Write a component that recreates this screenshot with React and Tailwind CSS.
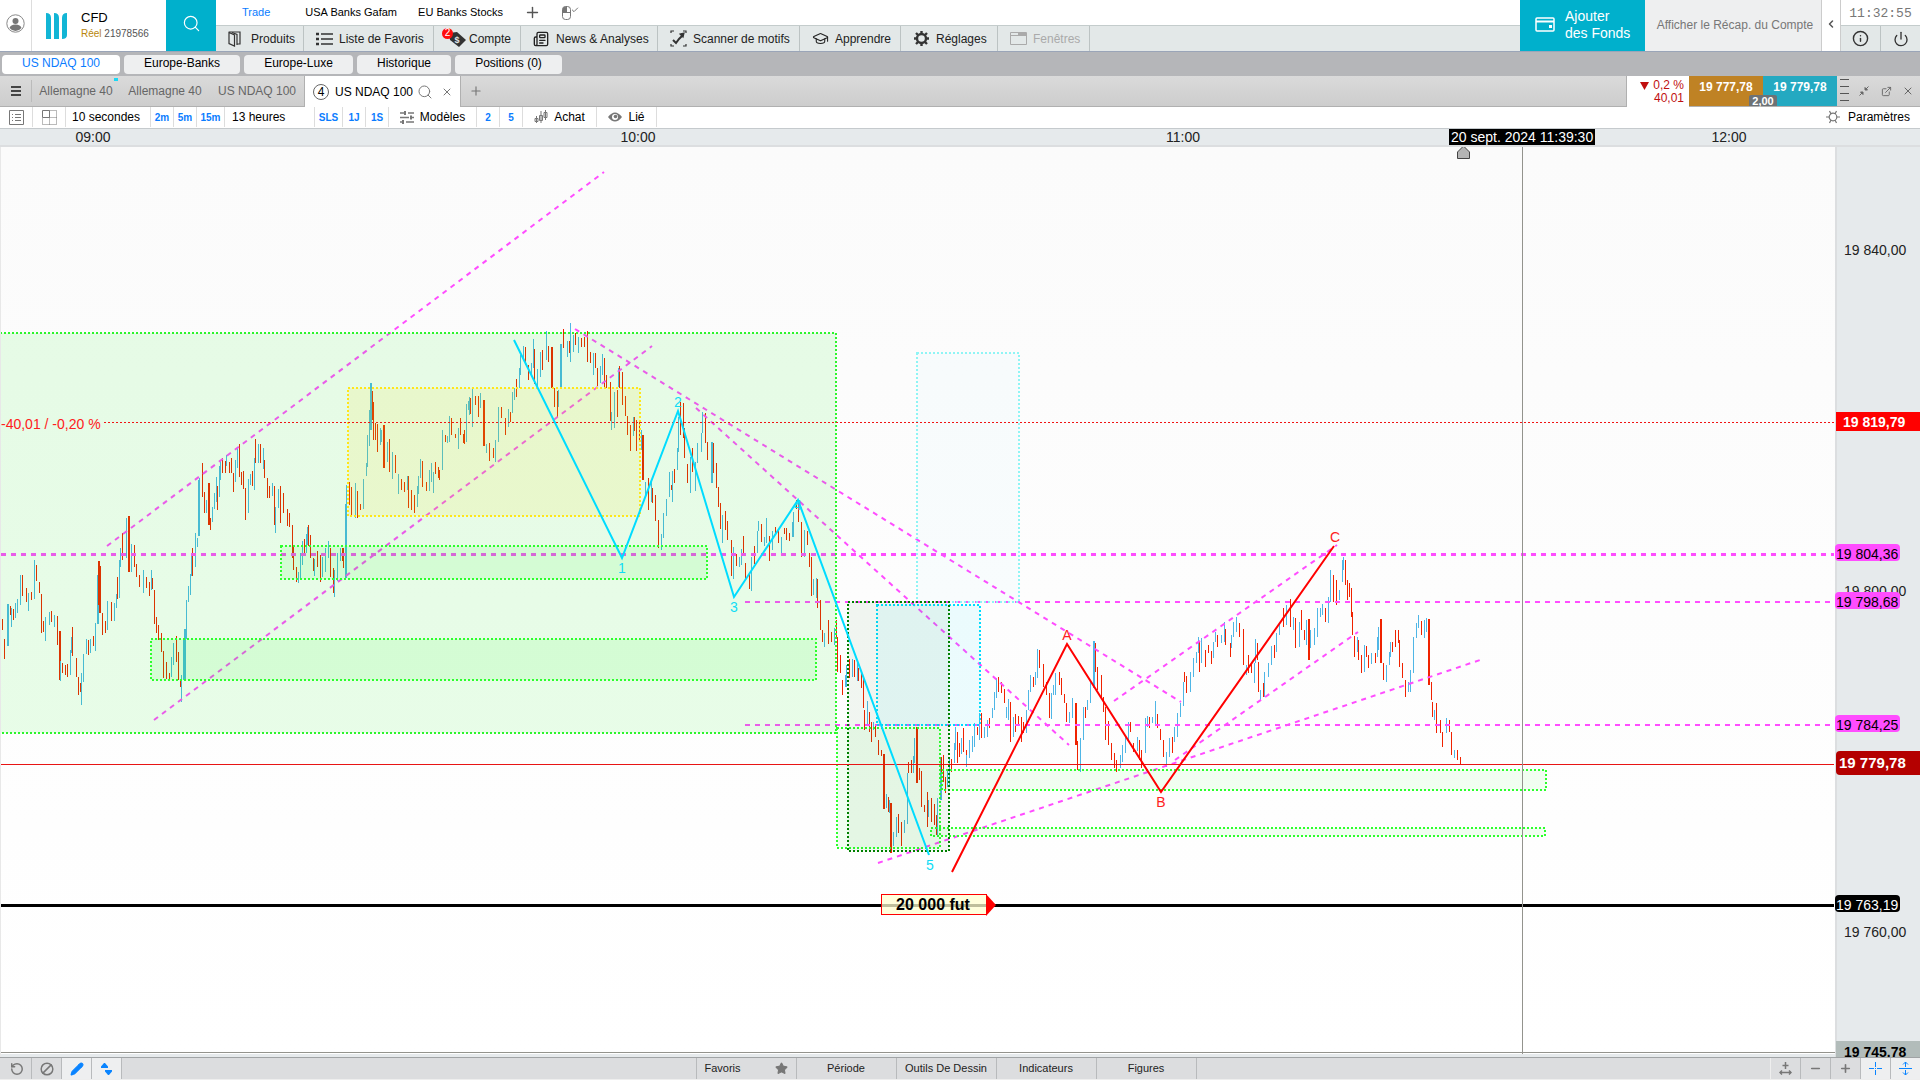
import { Search, Plus, X, Check, Power, Info, ExternalLink, GraduationCap, Newspaper, Ban, RotateCcw, Pencil, Star, Minus, ChevronLeft } from "lucide-react";

const FONT = "font-['Liberation_Sans',Arial,sans-serif]";

// one entry per bar: direction (u/d), x, high, low
const BARS = `
d2,619,630 d4,639,659 u7,604,646 d10,606,615 u11,608,627 d13,609,620 u15,603,618 u17,599,613 u20,575,605 d22,575,596
d26,588,602 u28,593,611 d31,592,600 u34,560,599 d36,565,581 d39,582,593 d41,594,633 d43,621,632 u45,617,641 u49,612,625
d51,611,622 u54,615,627 d57,616,645 d59,631,680 u60,661,681 d62,663,673 d65,665,675 d67,664,677 u70,650,675 u71,637,653
d72,627,656 d76,658,677 d78,677,695 d80,683,692 u81,673,705 u83,654,682 u86,639,654 d88,640,655 u90,639,653 d93,636,646
u95,623,651 u97,575,624 d98,561,605 d99,566,613 d102,613,635 d105,621,633 u107,601,630 d111,602,621 u114,603,621 u116,594,608
d117,577,599 u119,560,598 u120,548,567 d122,533,560 u126,518,558 d128,516,572 u131,544,572 d134,545,567 d136,564,577 d139,575,587
u143,570,593 d146,577,588 d149,582,596 u151,570,590 d152,578,589 d154,590,624 d156,617,633 d158,625,640 d161,633,652 d163,651,678
d166,662,679 d169,673,679 u171,657,677 u173,643,665 d176,636,662 d178,652,680 d180,680,687 u181,675,702 u183,640,680 u184,629,680
u186,600,639 u188,586,602 u190,574,595 d192,548,576 u191,556,576 u195,533,567 u197,538,547 u198,480,536 u199,478,500 d202,463,497
d204,492,513 u206,500,513 d208,483,525 d210,518,530 u212,507,522 u214,493,509 u216,477,502 d217,486,510 u219,466,497 u220,461,480
d222,458,473 d225,461,473 u226,455,466 d229,462,473 d231,458,473 d233,473,492 u235,460,482 u237,448,468 d239,444,477 d241,472,485
d243,471,489 d245,488,520 u248,479,513 u250,474,485 d252,471,486 u254,458,490 d255,439,463 u258,444,463 d260,444,463 u263,448,469
d264,460,478 d267,478,498 d269,486,498 u272,483,496 d274,486,525 u275,507,533 u278,489,508 d280,486,523 d283,493,513 d287,509,526
d289,513,527 d292,525,558 d293,547,570 d296,567,582 u298,572,583 u300,553,579 u302,541,565 d304,539,556 u306,534,553 u307,527,545
d308,525,546 d310,535,558 d313,558,571 u314,559,576 d317,551,567 d320,555,582 u322,557,577 u325,548,572 u328,541,558 d330,548,577
d333,568,593 u334,570,597 u337,553,581 u340,548,561 d342,548,561 d343,548,568 u345,504,578 u346,485,510 d349,482,505 d351,487,516
u355,483,518 d357,491,518 d360,504,510 u363,479,509 u366,463,476 u367,435,467 u369,410,446 u370,383,430 d372,391,420 d373,402,440
d375,423,440 d377,424,452 u380,428,445 u381,430,442 d383,425,468 u387,442,462 d389,439,472 u392,452,479 d395,455,473 u398,474,494
d401,479,490 d404,482,492 u407,476,490 d408,476,508 d411,490,510 d414,495,513 u417,486,507 u418,476,494 u420,459,478 d422,461,487
d426,482,491 u429,470,491 u431,463,482 u433,472,493 d435,462,474 d438,467,478 d439,470,480 u442,430,470 d445,435,442 u447,436,443
u449,416,442 d451,418,435 d455,434,438 u458,428,449 d460,418,435 d463,434,443 u466,412,442 u469,397,415 u472,389,427 d475,396,404
d478,405,417 d464,430,444 u466,404,442 u468,401,410 d470,398,414 d475,396,405 d478,396,412 u480,393,408
d483,400,446 u486,444,453 d489,443,461 d493,448,458 u495,440,462 u498,407,442 d501,407,418 d505,418,435 u508,409,427 d510,412,422
u512,392,413 u514,388,400 d516,379,397 u519,368,388 u520,355,375 u523,346,358 d525,347,365 d528,365,380 u531,363,377 u533,339,368
d534,349,384 u537,369,387 u540,352,377 d542,350,370 u546,331,360 d548,346,362 d551,347,388 d554,388,407 d557,391,418 u558,390,407
u560,344,388 d563,329,348 u567,341,357 d569,341,353 u570,323,362 u573,335,352 d575,333,345 u578,337,353 d581,338,347 d584,337,347
d587,331,362 d590,352,363 u593,353,375 d595,353,368 d597,368,386 u600,366,383 u602,354,375 d604,358,388 d606,375,388 d610,382,421
u611,412,430 u614,392,428 d617,390,417 u618,368,387 d619,366,388 d622,372,405 d625,396,416 d627,416,435 d630,425,451 u633,417,436
d634,417,431 d636,420,451 d639,420,440 u641,430,450 d642,435,480 u645,482,495 d648,478,510 u651,481,502 d652,488,503 d655,495,521
d658,520,548 u661,534,550 u663,513,538 u666,499,516 u669,472,497 d671,485,490 u672,471,502 d674,469,483 u677,448,470 u678,417,452
d680,402,435 d683,403,438 d684,428,458 d687,464,483 u690,457,493 d692,448,472 u695,462,491 u697,443,463 u701,433,452 u702,412,433
d705,413,443 d707,442,460 u711,442,483 d713,443,473 d716,463,488 d718,487,507 d720,503,529 u722,515,543 d725,511,530 d727,521,540
d731,540,576 u733,547,579 d736,554,566 u739,557,567 u741,549,565 d743,536,556 d745,563,580 d749,573,589 u751,557,591 d754,546,564
u757,531,553 u758,521,531 d761,524,542 u764,537,546 u766,518,543 d769,536,561 u772,531,550 d775,527,535 d778,529,543 u781,537,555
d784,528,534 d786,528,540 d789,533,541 u792,522,537 u793,512,537 d796,500,509 d798,502,522 d801,522,557 u804,530,557 d807,531,545
d809,553,567 d811,557,596 u813,579,595 u816,578,598 d817,579,608 d820,600,630 d822,630,642 u824,633,647 d828,620,644 d831,632,642
u834,628,645 d836,620,637 d837,637,672 d840,655,673 d842,680,695 u845,675,687 u846,665,687 d849,659,678 u852,659,677 d854,660,677
u857,663,681 d858,668,681 d861,672,688 d863,678,708 d864,710,730 u867,701,725 d869,712,732 d871,722,742 u873,722,730 d875,725,737
d878,740,755 d881,750,756 d883,754,809 u886,794,808 d888,797,812 u889,800,813 d890,803,853 u893,832,846 u896,817,837 d898,814,833
d901,822,846 u904,820,833 u907,807,824 d908,762,773 u907,773,808 d911,760,773 u913,756,773 u914,738,763 d916,727,783 d919,768,780
d921,771,807 d924,805,812 d927,792,827 u928,800,817 d931,798,822 d934,804,825 d936,815,835 u937,798,837 u940,757,800 d941,757,773
d943,755,782 d945,777,793 u947,771,787 u949,758,787 d951,759,772 u954,743,763 u955,727,750 d957,732,763 d959,743,757 u961,738,754
d963,728,752 d966,750,763 u966,755,767 u969,740,758 u972,736,752 u974,723,747 d977,727,735 u979,713,740 d981,713,738 u984,727,738
u987,720,737 d989,718,728 u992,708,718 u994,692,710 u996,678,698 d998,677,692 d1001,682,693 d1004,689,703 u1006,707,718 u1008,699,720
d1010,702,742 u1013,717,737 d1015,714,732 d1018,716,725 d1021,717,742 d1023,722,733 u1026,710,733 u1028,690,710 u1030,675,692
d1033,677,687 u1035,672,685 u1037,649,678 d1039,650,668 d1043,664,687 d1046,682,695 d1049,693,718 u1051,693,719 u1053,685,695
u1055,673,695 d1059,672,685 d1061,678,695 d1064,694,703 d1066,703,722 u1069,712,723 u1072,698,718 d1075,703,745 d1077,741,770
u1080,738,772 u1083,707,740 d1085,707,718 u1087,700,710 u1090,680,703 u1093,641,688 d1095,643,672 d1097,667,690 d1101,675,698
d1103,697,712 d1105,707,740 d1108,721,745 d1111,743,760 d1114,753,768 d1116,760,772 u1120,755,768 u1122,745,762 u1125,737,753
u1128,722,740 d1130,722,732 d1133,743,752 u1137,737,751 d1139,740,760 d1141,750,768 u1145,718,753 u1147,716,727 d1149,717,728
u1152,717,723 u1155,701,725 d1157,714,728 d1160,729,740 d1163,740,757 u1166,752,767 u1169,738,757 d1172,737,753 u1174,727,742
u1177,713,737 u1180,703,717 u1183,682,706 d1184,672,682 d1186,676,693 u1190,672,692 u1193,658,677 u1196,652,663 u1198,637,653
d1199,642,672 u1201,638,663 d1205,650,667 d1208,645,653 d1211,651,664 u1213,642,658 u1215,632,642 d1217,635,647 u1221,635,643
u1224,622,642 d1225,629,645 d1230,643,657 u1231,635,648 u1233,622,637 u1236,617,632 d1239,623,637 d1243,629,665 u1246,665,675
d1248,655,673 d1251,663,673 u1254,663,683 u1255,639,663 d1257,643,660 d1258,662,692 u1260,690,700 d1263,683,697 u1264,672,697
u1268,663,677 u1271,646,665 d1274,645,658 u1276,633,652 u1279,623,635 d1283,608,627 u1286,605,625 d1290,599,627 u1293,617,630
d1295,618,648 u1299,622,647 d1301,610,630 d1304,630,640 u1306,620,645 d1308,619,660 u1310,630,648 u1314,628,645 u1317,608,637
u1320,608,617 u1322,604,615 d1325,608,622 u1328,597,623 u1330,570,602 d1333,575,602 d1336,580,605 u1339,590,600 u1342,560,582
u1343,557,570 d1345,560,585 d1347,580,600 d1349,583,597 d1351,588,617 d1352,612,635 d1354,636,657 u1357,637,652 d1358,640,660
d1361,655,673 u1364,645,672 d1366,646,657 d1368,655,668 u1371,653,664 d1375,653,663 u1377,637,657 u1378,627,650 d1380,619,663
d1383,663,680 u1386,665,682 u1389,652,665 u1390,642,657 d1392,642,652 d1395,630,647 d1398,630,643 d1399,640,667 d1402,663,678
d1405,680,697 u1408,682,692 u1410,670,692 u1413,637,673 u1416,623,638 u1418,615,628 d1421,621,635 u1424,620,638 u1426,618,632
d1428,619,685 d1431,682,700 d1432,702,717 u1434,710,720 d1436,703,733 d1440,720,733 d1442,732,747 u1446,718,733 d1449,720,732
d1451,732,755 u1454,750,758 d1457,750,760 d1460,757,764`;

const candles = BARS.trim().split(/\s+/).map((t) => {
    const [x, top, bottom] = t.slice(1).split(",").map(Number);
    return { up: t[0] === "u", x, top, bottom };
});

const trendLines = [
    [107, 546, 604, 172],
    [154, 720, 652, 346],
    [575, 329, 1181, 702],
    [696, 408, 1069, 745],
    [878, 863, 1480, 660],
    [1114, 701, 1337, 545],
    [1175, 760, 1358, 632],
];

// x1, y1, x2, y2, stroke, fill, fill opacity
const zones = [
    [0, 333, 836, 733, "#2cf52c", "#10f010", 0.09],
    [281, 546, 707, 579, "#2cff2c", "#00ff00", 0.08],
    [151, 639, 816, 680, "#2cff2c", "#00ff00", 0.08],
    [348, 388, 640, 516, "#ffe619", "#ffdc00", 0.11],
    [837, 728, 940, 848, "#2cff2c", "#00ff00", 0.05],
    [942, 770, 1546, 790, "#2cff2c", "#00ff00", 0.05],
    [931, 828, 1545, 836, "#2cff2c", "#00ff00", 0.05],
    [917, 353, 1019, 602, "#8ff5f5", "#00dcff", 0.02],
    [877, 605, 980, 725, "#00dcff", "#00dcff", 0.07],
    [848, 602, 949, 851, "#008000", "#207020", 0.06],
];

const waveLabels = [
    ["1", 622, 573, "#10dcf5"],
    ["2", 678, 407, "#10dcf5"],
    ["3", 734, 612, "#10dcf5"],
    ["4", 798, 510, "#10dcf5"],
    ["5", 930, 870, "#10dcf5"],
    ["A", 1067, 640, "#ff2020"],
    ["B", 1161, 807, "#ff2020"],
    ["C", 1335, 542, "#ff2020"],
];

const navItems = [
    { label: "Produits", width: "w-[88px]", icon: <ProductsIcon /> },
    { label: "Liste de Favoris", width: "w-[130px]", icon: <ListIcon /> },
    { label: "Compte", width: "w-[87px]", icon: <AccountIcon /> },
    { label: "News & Analyses", width: "w-[137px]", icon: <Newspaper size={16} /> },
    { label: "Scanner de motifs", width: "w-[142px]", icon: <ScannerIcon /> },
    { label: "Apprendre", width: "w-[101px]", icon: <GraduationCap size={17} strokeWidth={1.5} /> },
    { label: "Réglages", width: "w-[97px]", icon: <GearIcon /> },
    { label: "Fenêtres", width: "w-[92px]", icon: <WindowIcon />, disabled: true },
];

const workspaces = [
    { label: "US NDAQ 100", width: "w-[118px]", active: true },
    { label: "Europe-Banks", width: "w-[116px]" },
    { label: "Europe-Luxe", width: "w-[109px]" },
    { label: "Historique", width: "w-[94px]" },
    { label: "Positions (0)", width: "w-[107px]" },
];

const timeTicks = [
    ["09:00", 93],
    ["10:00", 638],
    ["11:00", 1183],
    ["12:00", 1729],
];

const priceTicks = [
    ["19 840,00", 103],
    ["19 800,00", 444],
    ["19 760,00", 785],
];

const priceTags = [
    ["19 804,36", 397, "bg-[#ff4dff] text-black"],
    ["19 798,68", 445, "bg-[#ff4dff] text-black"],
    ["19 784,25", 568, "bg-[#ff4dff] text-black"],
    ["19 763,19", 748, "bg-black text-white"],
];

function UserIcon() {
    return (
        <svg width="19" height="19" viewBox="0 0 19 19">
            <circle cx="9.500" cy="9.500" r="8.700" fill="#fff" stroke="#888" />
            <circle cx="9.500" cy="7" r="3" fill="#777" />
            <path d="M3.500 14q1-3.500 6-3.500t6 3.500q-2.500 3-6 3t-6-3z" fill="#777" />
        </svg>
    );
}

function ProductsIcon() {
    return (
        <svg width="13" height="16" viewBox="0 0 13 16" fill="none" stroke="#333" strokeWidth="1.2">
            <path d="M1 1.500l5.500 2.500v11L1 12.500z" />
            <path d="M1 1h11v12H9" />
            <path d="M4 1.500l5 2v10.500" />
        </svg>
    );
}

function ListIcon() {
    return (
        <svg width="17" height="14" viewBox="0 0 17 14" fill="none" stroke="#333" strokeWidth="1.800">
            <path d="M5 2h12M5 7h12M5 12h12" strokeWidth="1.500" />
            <path d="M0 2h3M0 7h3M0 12h3" strokeWidth="2.500" />
        </svg>
    );
}

function AccountIcon() {
    return (
        <span className="relative flex">
            <svg width="20" height="18" viewBox="0 0 20 18">
                <path d="M3 3l8-1 9 8-7 7-9-7z" fill="#333" />
                <text x="11" y="13" fontSize="9" fontWeight="bold" fill="#e3e8e8" textAnchor="middle">$</text>
            </svg>
            <span className="absolute -left-1 -top-0.5 flex h-[11px] w-[11px] items-center justify-center rounded-full bg-[#ff0d0d] text-[10px] leading-none text-white">2</span>
        </span>
    );
}

function ScannerIcon() {
    return (
        <svg width="17" height="17" viewBox="0 0 17 17" fill="none" stroke="#333" strokeWidth="1.2">
            <path d="M1 3V1h3M13 1h3v2M16 14v2h-3M4 16H1v-2" />
            <path d="M3 10l3 3 3-4 4-4" strokeWidth="2" />
            <path d="M10 4l4-1-1 4z" fill="#333" />
        </svg>
    );
}

function GearIcon() {
    return (
        <svg width="17" height="17" viewBox="0 0 17 17" fill="none" stroke="#333">
            <circle cx="8.500" cy="8.500" r="4.500" strokeWidth="2.400" />
            <path d="M8.500 1v3M8.500 13v3M1 8.500h3M13 8.500h3M3 3l2.500 2.500M11.500 11.500l2.500 2.500M14 3l-2.500 2.500M5.500 11.500L3 14" strokeWidth="2.400" />
        </svg>
    );
}

function WindowIcon() {
    return (
        <svg width="17" height="13" viewBox="0 0 17 13" fill="none" stroke="#aaa">
            <path d="M.5.5h16v12H.5zM.5 3.500h16" />
            <path d="M8 2h8" strokeWidth="3" />
        </svg>
    );
}

function SunIcon() {
    return (
        <svg width="14" height="14" viewBox="0 0 14 14" fill="none" stroke="#777" strokeWidth="1.200">
            <circle cx="7" cy="7" r="3.800" />
            <path d="M0 7h3M11 7h3M3.500 1l1.500 3M9 10l1.500 3M10.500 1L9 4M5 10l-1.500 3" />
        </svg>
    );
}

function Header() {
    return (
        <header className="flex h-[52px] shrink-0 border-b border-[#9aa5b8] bg-white">
            <button type="button" aria-label="Profil" className="flex w-8 items-center justify-center border-r border-[#ddd] pb-1">
                <UserIcon />
            </button>
            <div className="flex w-[134px] items-center gap-3.5 pl-3.5">
                <svg width="21" height="26" viewBox="0 0 21 26" fill="#12b5d5">
                    <path d="M0 0q5 0 5 5v21H0zM8 0q5 0 5 5v21H8zM16 5q0-5 5-5v22q0 4-5 4z" />
                </svg>
                <div>
                    <div className="text-[13px] leading-4 text-black">CFD</div>
                    <div className="whitespace-nowrap text-[10px] leading-4 text-[#555]">
                        <span className="text-[#b8860b]">Réel</span> 21978566
                    </div>
                </div>
            </div>
            <button type="button" aria-label="Rechercher" className="flex w-[50px] items-center justify-center bg-[#00b0cc] pb-1 text-white">
                <Search size={19} strokeWidth={1.5} />
            </button>
            <div className="flex min-w-0 flex-1 flex-col">
                <div className="flex h-[25px] items-center gap-[21px] pl-[26px] text-[11px] text-black">
                    <a href="#trade" className="mr-3.5 text-[#0a7cff]">Trade</a>
                    <a href="#usa">USA Banks Gafam</a>
                    <a href="#eu">EU Banks Stocks</a>
                    <button type="button" aria-label="Ajouter un espace" className="text-[#555]"><Plus size={17} /></button>
                    <button type="button" aria-label="Souris" className="flex text-[#777]">
                        <svg width="9" height="14" viewBox="0 0 9 14" fill="none" stroke="#777">
                            <rect x="0.500" y="0.500" width="8" height="13" rx="3" />
                            <path d="M1 6.500h7" />
                            <path d="M4.500 1v5H1V3q0-2 3.500-2z" fill="#777" />
                        </svg>
                        <Check size={8} strokeWidth={3} />
                    </button>
                </div>
                <nav className="flex flex-1 border-t border-[#c4cccc] bg-[#e3e8e8] text-[12px] text-[#222]">
                    {navItems.map((item) => (
                        <button
                            key={item.label}
                            type="button"
                            disabled={item.disabled}
                            className={`${item.width} flex items-center whitespace-nowrap border-r border-[#bcc3c3] pl-2.5 disabled:text-[#aaa]`}
                        >
                            <span className="flex w-[25px] shrink-0 items-center pl-0.5">{item.icon}</span>
                            {item.label}
                        </button>
                    ))}
                </nav>
            </div>
            <button type="button" className="flex w-[125px] items-center gap-2.5 bg-[#00b0cc] pb-0.5 pl-[15px] text-left text-[14px] leading-[17px] text-white">
                <svg width="20" height="15" viewBox="0 0 20 15" fill="none" stroke="#fff" strokeWidth="1.500">
                    <rect x="1" y="1" width="18" height="13" rx="1" />
                    <path d="M1 4.500h18" strokeWidth="2" />
                    <path d="M14 9.500h3" strokeWidth="3" />
                </svg>
                <span>Ajouter<br />des Fonds</span>
            </button>
            <button type="button" className="w-44 whitespace-nowrap bg-[#eeeff0] pb-0.5 pl-1 text-center text-[12px] text-[#777]">Afficher le Récap. du Compte</button>
            <button type="button" aria-label="Replier" className="flex w-5 items-center justify-center border-x border-[#ccc] pb-1 text-[#555]"><ChevronLeft size={12} strokeWidth={3} /></button>
            <div className="flex w-[79px] flex-col">
                <div className="h-[25px] text-center font-['Liberation_Mono',monospace] text-[13px] leading-7 text-[#777]">11:32:55</div>
                <div className="flex flex-1 border-t border-[#c4cccc] bg-[#e3e8e8] text-[#333]">
                    <button type="button" aria-label="Infos" className="flex flex-1 items-center justify-center border-r border-[#bcc3c3]"><Info size={17} strokeWidth={2} /></button>
                    <button type="button" aria-label="Quitter" className="flex flex-1 items-center justify-center"><Power size={16} strokeWidth={2} /></button>
                </div>
            </div>
        </header>
    );
}

function ChartTabs() {
    return (
        <div className="flex h-[31px] shrink-0 items-stretch border-b border-[#b0b0b0] bg-linear-to-b from-[#dadada] to-[#cdcdcd] text-[12px] text-[#666]">
            <button type="button" aria-label="Menu" className="my-1 flex w-8 items-center justify-center border-r border-[#bbb]">
                <svg width="10" height="10" viewBox="0 0 10 10" stroke="#444" strokeWidth="2"><path d="M0 1h10M0 5h10M0 9h10" /></svg>
            </button>
            <button type="button" className="relative w-[88px]">
                Allemagne 40
                <span className="absolute right-0.5 top-0.5 h-[3px] w-1 bg-[#19d8f5]" />
            </button>
            <button type="button" className="w-[90px]">Allemagne 40</button>
            <button type="button" className="w-[94px]">US NDAQ 100</button>
            <div className="-mb-px flex w-[157px] items-center border-x border-[#b0b0b0] bg-white pl-2 text-black">
                <span className="mr-1.5 flex h-4 w-4 items-center justify-center rounded-full border border-[#666] text-[12px] leading-none">4</span>
                US NDAQ 100
                <Search size={16} strokeWidth={1.5} className="ml-1 text-[#777]" />
                <button type="button" aria-label="Fermer" className="ml-2 text-[#777]"><X size={12} /></button>
            </div>
            <button type="button" aria-label="Nouvel onglet" className="flex w-[30px] items-center justify-center text-[#777]"><Plus size={14} /></button>
            <div className="flex-1" />
            <div className="-mb-px w-[63px] border-l border-[#b0b0b0] bg-white pr-[5px] pt-[3px] text-right leading-[13px] text-[#c01010]">
                <div className="flex items-center justify-end gap-1">
                    <svg width="9" height="8" viewBox="0 0 9 8" fill="#c01010"><path d="M0 0h9L4.500 8z" /></svg>
                    0,2 %
                </div>
                <div>40,01</div>
            </div>
            <div className="relative flex text-[12px] font-bold text-white">
                <button type="button" className="w-[74px] bg-[#bf8224] pb-2">19 777,78</button>
                <button type="button" className="w-[74px] bg-[#24a9c1] pb-2">19 779,78</button>
                <span className="absolute bottom-0 left-[60px] h-[11px] w-7 rounded-t-xs bg-[#6d7276] text-center text-[11px] leading-[12px]">2,00</span>
            </div>
            <div className="flex w-[83px] items-center gap-2.5 pl-[3px]">
                <svg width="9" height="28" viewBox="0 0 9 28" stroke="#555"><path d="M0 2.500h9M0 9.500h9M0 16.500h9M0 23.500h9" /></svg>
                <svg width="10" height="10" viewBox="0 0 10 10" fill="#666" stroke="#666">
                    <path d="M6 4L9.500.500M.5 9.500L4 6" fill="none" />
                    <path d="M6 1.500V4h2.500zM4 8.500V6H1.500z" />
                </svg>
                <ExternalLink size={11} className="ml-0.5" />
                <X size={12} />
            </div>
        </div>
    );
}

function Cell({ className, children }) {
    return <button type="button" className={`flex items-center justify-center whitespace-nowrap border-r border-[#ddd] ${className}`}>{children}</button>;
}

function Toolbar() {
    const blue = "text-[10px] font-bold text-[#0a7cff]";
    return (
        <div className="flex h-[22px] shrink-0 border-b border-[#c5cacd] bg-white pb-px text-[12px] text-black">
            <Cell className="w-[33px]">
                <svg width="15" height="15" viewBox="0 0 15 15" fill="none" stroke="#777"><path d="M.5.5h14v14H.5zM3 4.500h1M6 4.500h6M3 7.500h1M6 7.500h6M3 10.500h1M6 10.500h6" /></svg>
            </Cell>
            <Cell className="w-[33px]">
                <svg width="15" height="15" viewBox="0 0 15 15" fill="none" stroke="#777"><path d="M.5.5h7v7h-7z" /><path d="M7.500.5h7v14H.5v-7M7.500 7.500h7M7.500 7.500v7" strokeDasharray="1 1" /></svg>
            </Cell>
            <Cell className="w-[85px] pr-1">10 secondes</Cell>
            <Cell className={`w-[23px] ${blue}`}>2m</Cell>
            <Cell className={`w-[23px] ${blue}`}>5m</Cell>
            <Cell className={`w-[28px] ${blue}`}>15m</Cell>
            <button type="button" className="w-[90px] border-r border-[#ddd] pl-[7px] text-left">13 heures</button>
            <Cell className={`w-[28px] ${blue}`}>SLS</Cell>
            <Cell className={`w-[23px] ${blue}`}>1J</Cell>
            <Cell className={`w-[23px] ${blue}`}>1S</Cell>
            <Cell className="w-[88px] gap-1.5">
                <svg width="14" height="13" viewBox="0 0 14 13" stroke="#777" strokeWidth="1.500">
                    <path d="M0 2h4M8 2h6M0 6.500h9M12 6.500h2M0 11h2M6 11h8" />
                    <path d="M5 0v4M11 4.500v4M3 9v4" strokeWidth="2" />
                </svg>
                Modèles
            </Cell>
            <Cell className={`w-[23px] ${blue}`}>2</Cell>
            <Cell className={`w-[23px] ${blue}`}>5</Cell>
            <Cell className="w-[74px] gap-1.5">
                <svg width="14" height="14" viewBox="0 0 14 14" fill="none" stroke="#777"><path d="M2.500 6v7M1 8.500h3v3H1zM7 1v12M5.500 5.500h3v5h-3zM11.500 0v10M10 2.500h3v5h-3z" /></svg>
                Achat
            </Cell>
            <Cell className="w-[60px] gap-1.5">
                <svg width="14" height="10" viewBox="0 0 14 10">
                    <path d="M0 5q7-9 14 0q-7 9-14 0z" fill="#777" />
                    <circle cx="7" cy="5" r="3" fill="#fff" />
                    <circle cx="7.500" cy="4.500" r="1.800" fill="#777" />
                </svg>
                Lié
            </Cell>
            <div className="flex-1" />
            <button type="button" className="flex items-center gap-2 pr-2.5"><SunIcon />Paramètres</button>
        </div>
    );
}

function Chart() {
    return (
        <svg viewBox="1 147 1834 907" preserveAspectRatio="none" className="block min-h-0 w-full flex-1 bg-linear-to-b from-[#fbfbfb] to-white">
            <g shapeRendering="crispEdges">
                {candles.map((c, i) => (
                    <rect key={i} x={c.x} y={c.top} width={c.bottom - c.top > 40 ? 2 : 1} height={c.bottom - c.top} fill={c.up ? "#4fb6e6" : "#f02200"} />
                ))}
            </g>
            <g stroke="#ff4dff" strokeWidth="2" strokeDasharray="5 5">
                <path d="M1 554.500H1834" strokeWidth="3" />
                <path d="M745 602H1832M745 725H1832" />
                {trendLines.map(([x1, y1, x2, y2]) => (
                    <line key={x1} x1={x1} y1={y1} x2={x2} y2={y2} />
                ))}
            </g>
            {zones.map(([x1, y1, x2, y2, stroke, fill, opacity]) => (
                <rect
                    key={`${x1}-${y1}`}
                    x={x1}
                    y={y1}
                    width={x2 - x1}
                    height={y2 - y1}
                    stroke={stroke}
                    strokeWidth="2"
                    strokeDasharray="2 2"
                    fill={fill}
                    fillOpacity={opacity}
                />
            ))}
            <path d="M104 422.500H1834" stroke="#f01414" strokeDasharray="2 2" />
            <path d="M1 764.500H1834" stroke="#e81414" />
            <path d="M1 905.500H1834" stroke="#000" strokeWidth="3" />
            <text x="1" y="429" fontSize="14" fill="#ff2020">-40,01 / -0,20 %</text>
            <path d="M514 340L622 558L678 411L734 597L798 500L929 855" fill="none" stroke="#00dcff" strokeWidth="2" />
            <path d="M952 872L1067 644L1161 792L1334 546" fill="none" stroke="#ff0000" strokeWidth="2" />
            {waveLabels.map(([label, x, y, color]) => (
                <text key={label} x={x} y={y} fontSize="14" fill={color} textAnchor="middle">{label}</text>
            ))}
            <rect x="881.500" y="894.500" width="105" height="20" fill="#ffffd0" fillOpacity="0.75" stroke="#ff0000" />
            <path d="M986 894L996 905L986 916z" fill="#ff0000" />
            <text x="933" y="910" fontSize="16" fontWeight="bold" textAnchor="middle">20 000 fut</text>
            <path d="M1522.500 147V1054M1 1052.500H1835" stroke="#93938d" />
            <path d="M1457.500 158.500V152L1463.500 146L1469.500 152V158.500z" fill="#b4b4b4" stroke="#444" />
        </svg>
    );
}

function BottomBar() {
    const cell = "flex w-[30px] items-center justify-center border-r border-[#b8babc] text-[#777]";
    const active = "flex w-[30px] items-center justify-center border-r border-[#b8babc] bg-[#eeeff0] text-[#0a84ff]";
    const menu = "flex w-[100px] items-center justify-center border-r border-[#b8babc]";
    return (
        <footer className="flex h-[23px] shrink-0 border-b border-t border-b-[#eee] border-t-[#a0a3a5] bg-[#dcdddf] pl-0.5 text-[11px] text-[#222]">
            <button type="button" aria-label="Réinitialiser" className={cell}><RotateCcw size={14} strokeWidth={2.5} /></button>
            <button type="button" aria-label="Effacer" className={cell}><Ban size={14} strokeWidth={2.5} className="-scale-x-100" /></button>
            <button type="button" aria-label="Dessiner" className={active}><Pencil size={14} fill="#0a84ff" /></button>
            <button type="button" aria-label="Échelle" className={active}>
                <svg width="11" height="12" viewBox="0 0 11 12" fill="#0a84ff"><path d="M0 5V3.500L3 0h1L7 3.500V5zM4 7h7v1.500L8 12H7L4 8.500z" /></svg>
            </button>
            <div className="flex-1" />
            <button type="button" className="flex w-[101px] items-center justify-between border-x border-[#b8babc] px-2">Favoris <Star size={13} fill="#777" color="#777" /></button>
            <button type="button" className={menu}>Période</button>
            <button type="button" className={menu}>Outils De Dessin</button>
            <button type="button" className={menu}>Indicateurs</button>
            <button type="button" className={menu}>Figures</button>
            <div className="flex-1 border-r border-[#eee]" />
            <button type="button" aria-label="Ajuster" className={cell}>
                <svg width="13" height="13" viewBox="0 0 13 13" fill="none" stroke="#777" strokeWidth="1.500"><path d="M6.500 0v7M3.500 3.500h6M1 10.500h11" /><path d="M3 8.500l-2 2 2 2M10 8.500l2 2-2 2" /></svg>
            </button>
            <button type="button" aria-label="Zoom arrière" className={cell}><Minus size={13} strokeWidth={3} /></button>
            <button type="button" aria-label="Zoom avant" className={cell}><Plus size={13} strokeWidth={3} /></button>
            <button type="button" aria-label="Curseur" className={active}>
                <svg width="13" height="13" viewBox="0 0 13 13" stroke="#0a84ff" strokeWidth="1"><path d="M6.500 0v5M6.500 8v5M0 6.500h5M8 6.500h5M6 6.500h1" /></svg>
            </button>
            <button type="button" aria-label="Hauteur" className="flex w-[29px] items-center justify-center bg-[#eeeff0]">
                <svg width="13" height="13" viewBox="0 0 13 13" fill="none" stroke="#0a84ff"><path d="M0 6.500h13M6.500 0v5M6.500 8v5M4 2.500L6.500 0L9 2.500M4 10.500L6.500 13L9 10.500" /></svg>
            </button>
        </footer>
    );
}

export default function App() {
    return (
        <div className={`flex h-screen flex-col overflow-hidden ${FONT}`}>
            <Header />
            <div className="flex h-6 shrink-0 items-center gap-1 bg-[#b5b6b9] px-0.5 text-[12px]">
                {workspaces.map((w) => (
                    <button
                        key={w.label}
                        type="button"
                        className={`${w.width} h-[19px] rounded-sm pb-0.5 leading-4 ${w.active ? "bg-white text-[#0a7cff]" : "bg-[#eeeff0] text-black"}`}
                    >
                        {w.label}
                    </button>
                ))}
            </div>
            <ChartTabs />
            <Toolbar />
            <div className="relative h-[18px] shrink-0 border-b-2 border-[#dcdee0] bg-[#e6eaec] text-[14px] leading-4 text-[#222]">
                {timeTicks.map(([label, x]) => (
                    <span key={label} className="absolute -translate-x-1/2" style={{ left: x }}>{label}</span>
                ))}
                <span className="absolute left-[1449px] whitespace-nowrap bg-black px-0.5 text-white">20 sept. 2024 11:39:30</span>
            </div>
            <div className="flex min-h-0 flex-1 border-l border-[#e8e8e8]">
                <div className="flex min-w-0 flex-1 flex-col">
                    <Chart />
                    <div className="h-[3px] shrink-0 bg-[#e6eaec]" />
                </div>
                <aside className="relative w-[85px] shrink-0 overflow-hidden bg-[#e6eaec] text-[14px] leading-[17px] text-[#222]">
                    <div className="h-full w-0.5 bg-[#dcdee0]" />
                    {priceTicks.map(([label, y]) => (
                        <span key={label} className="absolute left-[9px] -translate-y-1/2" style={{ top: y }}>{label}</span>
                    ))}
                    {priceTags.map(([label, y, color]) => (
                        <span key={label} className={`absolute left-0 h-[17px] w-[65px] rounded-sm pl-px leading-5 ${color}`} style={{ top: y }}>{label}</span>
                    ))}
                    <span className="absolute left-px right-0 top-[265px] h-[19px] bg-[#ff0000] pl-[7px] font-bold leading-5 text-white">19 819,79</span>
                    <span className="absolute left-px right-0 top-[604px] h-6 rounded-l-sm bg-[#b40000] pl-[3px] text-[15px] font-bold leading-6 text-white">19 779,78</span>
                    <span className="absolute bottom-0 left-px right-0 h-4 overflow-hidden bg-[#b2bcba] pl-2 pt-[3px] font-bold text-black">19 745.78</span>
                </aside>
            </div>
            <BottomBar />
        </div>
    );
}
